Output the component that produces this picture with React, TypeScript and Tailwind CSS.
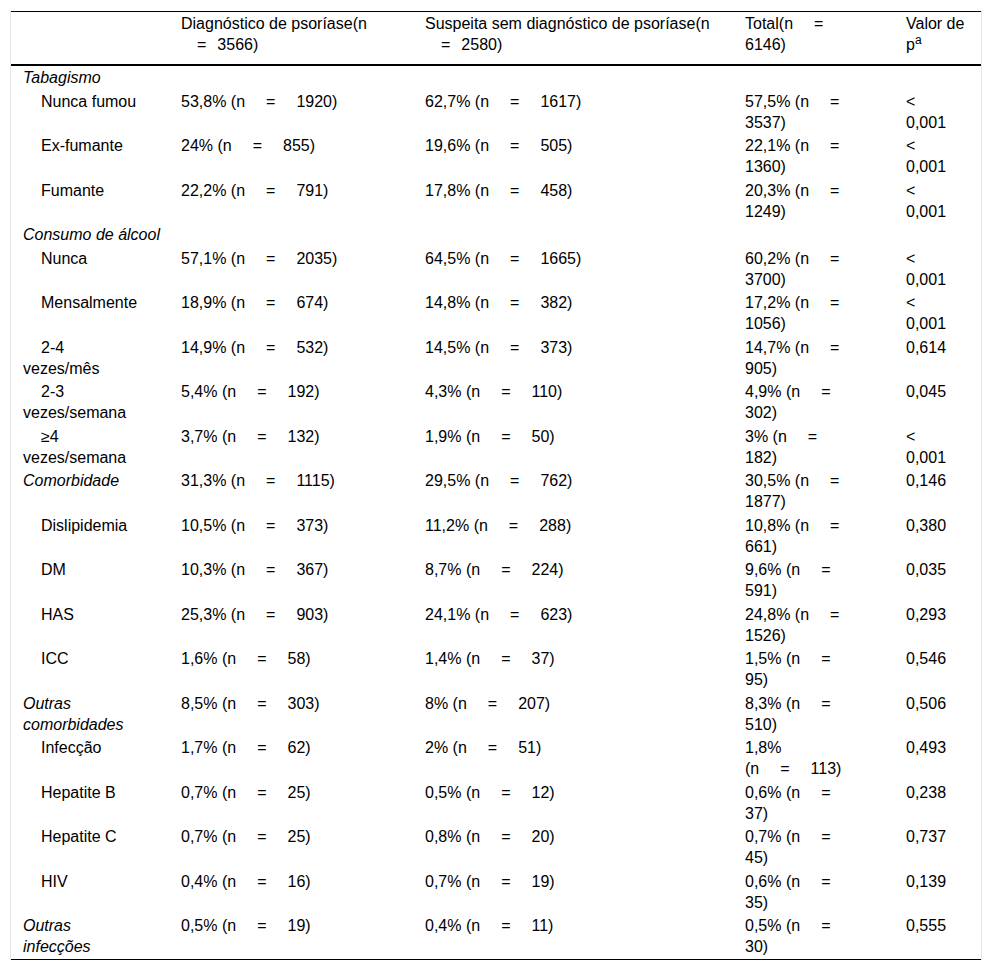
import type { ReactNode } from "react";

// spacing used around the "=" sign in "(n = 123)"
const Sp = () => <span className="inline-block w-[21px]" />;
const SpSm = () => <span className="inline-block w-[11px]" />;

function nv(pct: string, num: string) {
  return (
    <>
      {pct} (n<Sp />=<Sp />{num})
    </>
  );
}

function tot(pct: string, num: string) {
  return (
    <>
      {pct} (n<Sp />=<br />
      {num})
    </>
  );
}

const lt = (
  <>
    &lt;
    <br />
    0,001
  </>
);

interface Row {
  label: ReactNode;
  kind: "cat" | "sub" | "catRow";
  a?: ReactNode;
  b?: ReactNode;
  total?: ReactNode;
  p?: ReactNode;
}

const ROWS: Row[] = [
  { label: "Tabagismo", kind: "cat" },
  { label: "Nunca fumou", kind: "sub", a: nv("53,8%", "1920"), b: nv("62,7%", "1617"), total: tot("57,5%", "3537"), p: lt },
  { label: "Ex-fumante", kind: "sub", a: nv("24%", "855"), b: nv("19,6%", "505"), total: tot("22,1%", "1360"), p: lt },
  { label: "Fumante", kind: "sub", a: nv("22,2%", "791"), b: nv("17,8%", "458"), total: tot("20,3%", "1249"), p: lt },
  { label: "Consumo de álcool", kind: "cat" },
  { label: "Nunca", kind: "sub", a: nv("57,1%", "2035"), b: nv("64,5%", "1665"), total: tot("60,2%", "3700"), p: lt },
  { label: "Mensalmente", kind: "sub", a: nv("18,9%", "674"), b: nv("14,8%", "382"), total: tot("17,2%", "1056"), p: lt },
  { label: <>2-4<br />vezes/mês</>, kind: "sub", a: nv("14,9%", "532"), b: nv("14,5%", "373"), total: tot("14,7%", "905"), p: "0,614" },
  { label: <>2-3<br />vezes/semana</>, kind: "sub", a: nv("5,4%", "192"), b: nv("4,3%", "110"), total: tot("4,9%", "302"), p: "0,045" },
  { label: <>≥4<br />vezes/semana</>, kind: "sub", a: nv("3,7%", "132"), b: nv("1,9%", "50"), total: tot("3%", "182"), p: lt },
  { label: "Comorbidade", kind: "catRow", a: nv("31,3%", "1115"), b: nv("29,5%", "762"), total: tot("30,5%", "1877"), p: "0,146" },
  { label: "Dislipidemia", kind: "sub", a: nv("10,5%", "373"), b: nv("11,2%", "288"), total: tot("10,8%", "661"), p: "0,380" },
  { label: "DM", kind: "sub", a: nv("10,3%", "367"), b: nv("8,7%", "224"), total: tot("9,6%", "591"), p: "0,035" },
  { label: "HAS", kind: "sub", a: nv("25,3%", "903"), b: nv("24,1%", "623"), total: tot("24,8%", "1526"), p: "0,293" },
  { label: "ICC", kind: "sub", a: nv("1,6%", "58"), b: nv("1,4%", "37"), total: tot("1,5%", "95"), p: "0,546" },
  { label: <>Outras<br />comorbidades</>, kind: "catRow", a: nv("8,5%", "303"), b: nv("8%", "207"), total: tot("8,3%", "510"), p: "0,506" },
  {
    label: "Infecção",
    kind: "sub",
    a: nv("1,7%", "62"),
    b: nv("2%", "51"),
    total: (
      <>
        1,8%
        <br />
        (n<Sp />=<Sp />113)
      </>
    ),
    p: "0,493",
  },
  { label: "Hepatite B", kind: "sub", a: nv("0,7%", "25"), b: nv("0,5%", "12"), total: tot("0,6%", "37"), p: "0,238" },
  { label: "Hepatite C", kind: "sub", a: nv("0,7%", "25"), b: nv("0,8%", "20"), total: tot("0,7%", "45"), p: "0,737" },
  { label: "HIV", kind: "sub", a: nv("0,4%", "16"), b: nv("0,7%", "19"), total: tot("0,6%", "35"), p: "0,139" },
  { label: <>Outras<br />infecções</>, kind: "catRow", a: nv("0,5%", "19"), b: nv("0,4%", "11"), total: tot("0,5%", "30"), p: "0,555" },
];

const td = "pl-[12px] pr-0 pt-[1px] pb-[1.5px] align-top whitespace-nowrap text-left font-normal";

export default function App() {
  return (
    <div className="min-h-screen bg-white font-['Liberation_Sans',Arial,sans-serif] text-[16px] leading-[21px] text-black">
      <div className="ml-[10px] mt-[11px] w-[972px] border-x border-[#e6e6e6]">
        <table className="w-full table-fixed border-collapse">
          <colgroup>
            <col className="w-[158px]" />
            <col className="w-[244px]" />
            <col className="w-[320px]" />
            <col className="w-[161px]" />
            <col className="w-[87px]" />
          </colgroup>
          <thead>
            <tr className="border-t border-b-2 border-black">
              <th className={`${td} pb-[9px]`} />
              <th className={`${td} pb-[9px]`}>
                Diagnóstico de psoríase(n
                <br />
                {"\u2003"}=<SpSm />3566)
              </th>
              <th className={`${td} pb-[9px]`}>
                Suspeita sem diagnóstico de psoríase(n
                <br />
                {"\u2003"}=<SpSm />2580)
              </th>
              <th className={`${td} pb-[9px]`}>
                Total(n<Sp />=
                <br />
                6146)
              </th>
              <th className={`${td} pb-[9px]`}>
                Valor de
                <br />
                p<sup className="text-[12px] leading-none">a</sup>
              </th>
            </tr>
          </thead>
          <tbody>
            {ROWS.map((r, i) => (
              <tr key={i} className={i === ROWS.length - 1 ? "border-b border-black" : ""}>
                <td className={`${td} ${r.kind === "sub" ? "indent-[18px]" : "italic"}`}>{r.label}</td>
                <td className={td}>{r.a}</td>
                <td className={td}>{r.b}</td>
                <td className={td}>{r.total}</td>
                <td className={td}>{r.p}</td>
              </tr>
            ))}
          </tbody>
        </table>
      </div>
    </div>
  );
}
